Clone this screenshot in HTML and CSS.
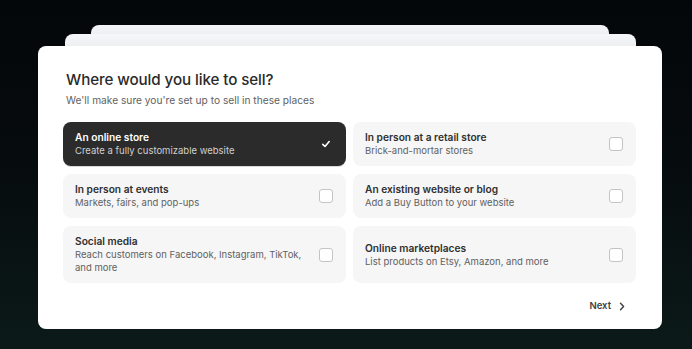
FILE: index.html
```html
<!DOCTYPE html>
<html>
<head>
<meta charset="utf-8">
<link rel="stylesheet" href="styles.css">
</head>
<body>
<div class="stage">
  <div class="back back-2"></div>
  <div class="back back-1"></div>
  <div class="card">
    <h1 class="title">Where would you like to sell?</h1>
    <p class="subtitle">We'll make sure you're set up to sell in these places</p>
    <div class="grid">
      <div class="option selected">
        <div class="text">
          <div class="opt-title">An online store</div>
          <div class="opt-desc">Create a fully customizable website</div>
        </div>
        <svg class="check" width="14" height="14" viewBox="0 0 14 14"><path d="M3.8 7.4 L6 9.5 L10.2 4.6" fill="none" stroke="#fff" stroke-width="1.6" stroke-linecap="round" stroke-linejoin="round"/></svg>
      </div>
      <div class="option">
        <div class="text">
          <div class="opt-title">In person at a retail store</div>
          <div class="opt-desc">Brick-and-mortar stores</div>
        </div>
        <span class="box"></span>
      </div>
      <div class="option">
        <div class="text">
          <div class="opt-title">In person at events</div>
          <div class="opt-desc">Markets, fairs, and pop-ups</div>
        </div>
        <span class="box"></span>
      </div>
      <div class="option">
        <div class="text">
          <div class="opt-title">An existing website or blog</div>
          <div class="opt-desc">Add a Buy Button to your website</div>
        </div>
        <span class="box"></span>
      </div>
      <div class="option">
        <div class="text">
          <div class="opt-title">Social media</div>
          <div class="opt-desc">Reach customers on Facebook, Instagram, TikTok, and more</div>
        </div>
        <span class="box"></span>
      </div>
      <div class="option">
        <div class="text">
          <div class="opt-title">Online marketplaces</div>
          <div class="opt-desc">List products on Etsy, Amazon, and more</div>
        </div>
        <span class="box"></span>
      </div>
    </div>
    <div class="footer">
      <span class="next">Next</span>
      <svg class="chev" width="6" height="9" viewBox="0 0 6 9"><path d="M1.5 1.2 L4.6 4.5 L1.5 7.8" fill="none" stroke="#404040" stroke-width="1.4" stroke-linecap="round" stroke-linejoin="round"/></svg>
    </div>
  </div>
</div>
</body>
</html>
```
FILE: styles.css
```css
* { box-sizing: border-box; }
html, body { margin: 0; padding: 0; }
body {
  width: 692px;
  height: 349px;
  overflow: hidden;
  background: linear-gradient(180deg, #04070a 0%, #060b0d 45%, #0b1a18 100%);
  font-family: Inter, "Noto Sans", sans-serif;
  color: #303030;
}
.stage {
  padding-top: 25px;
  display: flex;
  flex-direction: column;
}
.back {
  height: 24px;
  border-radius: 8px 8px 0 0;
}
.back-2 {
  margin: 0 83px 0 91px;
  margin-bottom: -15px;
  background: linear-gradient(180deg, #f4f5f7 0%, #e4e5e9 100%);
}
.back-1 {
  margin: 0 56px 0 65px;
  margin-bottom: -12px;
  background: linear-gradient(180deg, #f6f7f9 0%, #e6e7ea 100%);
}
.card {
  margin-left: 38px;
  width: 624px;
  height: 283px;
  background: #fff;
  border-radius: 8px;
  padding: 24px 26px 0 25px;
}
.title {
  margin: 0 0 0 3px;
  font-size: 15.2px;
  font-weight: 500;
  line-height: 20px;
  color: #2a2a2a;
  letter-spacing: -0.1px;
}
.subtitle {
  margin: 4px 0 0 3px;
  font-size: 10.2px;
  line-height: 13px;
  color: #616161;
}
.grid {
  margin-top: 15px;
  display: grid;
  grid-template-columns: 283px 283px;
  column-gap: 7px;
  row-gap: 8px;
}
.option {
  background: #f6f6f6;
  border-radius: 8px;
  padding: 9px 13px 9px 12px;
  display: flex;
  align-items: center;
  justify-content: space-between;
  gap: 10px;
}
.option.selected {
  background: #2b2b2b;
  box-shadow: 0 1px 0 rgba(0,0,0,0.15);
}
.text { flex: 1; min-width: 0; }
.opt-title {
  font-size: 10.2px;
  font-weight: 600;
  line-height: 13px;
  color: #303030;
}
.opt-desc {
  font-size: 9.5px;
  line-height: 13px;
  color: #616161;
}
.selected .opt-title { color: #fff; }
.selected .opt-desc { color: #cfcfcf; }
.box {
  flex: none;
  width: 14px;
  height: 14px;
  border: 1px solid #c4c4c4;
  border-radius: 3px;
  background: #fff;
}
.check { flex: none; }
.footer {
  margin-top: 16px;
  display: flex;
  justify-content: flex-end;
  align-items: center;
  gap: 8px;
  padding-right: 11px;
}
.next {
  font-size: 9.5px;
  font-weight: 600;
  color: #404040;
  line-height: 14px;
}
```
